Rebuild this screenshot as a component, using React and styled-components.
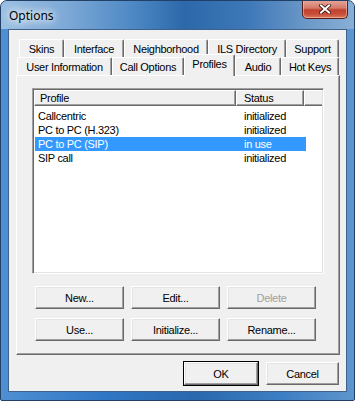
import styled, { createGlobalStyle } from "styled-components";

const GlobalStyle = createGlobalStyle`
  html, body {
    margin: 0;
    padding: 0;
    background: #fff;
  }
  body {
    font-family: "Liberation Sans", Arial, sans-serif;
    font-size: 11px;
    letter-spacing: -0.3px;
    color: #000;
  }
`;

const Window = styled.div`
  width: 355px;
  height: 401px;
  box-sizing: border-box;
  display: flex;
  flex-direction: column;
  border: 1px solid #223f66;
  border-radius: 7px 7px 2px 2px;
  overflow: hidden;
  background: linear-gradient(90deg, #4f8fd3 0%, #2f76c4 30%, #2a68ad 55%, #3d7fc4 80%, #5e95cd 100%);
`;

const TitleBar = styled.div`
  height: 28px;
  display: flex;
  align-items: flex-start;
  justify-content: space-between;
  background: linear-gradient(90deg, #9bbfe2 0%, #7eaad7 18%, #4c87c4 38%, #2c68aa 52%, #3e78b8 70%, #6f9bc9 88%, #8aafd6 100%);
`;

const Title = styled.span`
  font-family: "Noto Sans", "Open Sans", sans-serif;
  font-size: 12px;
  letter-spacing: 0;
  color: #000;
  padding: 6px 0 0 8px;
  text-shadow: 0 0 6px #fff, 0 0 10px #fff, 0 0 14px #eaf3fc;
`;

const CloseButton = styled.div`
  width: 46px;
  height: 19px;
  margin: -1px 6px 0 0;
  box-sizing: border-box;
  border: 1px solid #5a1e1a;
  border-top: none;
  border-radius: 0 0 5px 5px;
  box-shadow: inset 0 0 0 1px rgba(255, 200, 190, 0.55);
  background: linear-gradient(180deg, #e6a99c 0%, #d3796a 45%, #c0412d 55%, #c9503a 80%, #dd7d5c 100%);
  display: flex;
  align-items: center;
  justify-content: center;
`;

const ClientArea = styled.div`
  flex: 1;
  margin: 0 7px 8px 7px;
  border: 1px solid #3f628a;
  background: #f0f0f0;
  padding: 9px 6px 0 7px;
  display: flex;
  flex-direction: column;
`;

const TabRow = styled.div`
  display: flex;
  align-items: flex-end;
  height: 18px;
  margin-left: ${(p) => p.$indent}px;
`;

const Tab = styled.div`
  position: relative;
  box-sizing: border-box;
  width: ${(p) => p.$width}px;
  height: ${(p) => (p.$active ? 22 : 18)}px;
  margin-bottom: ${(p) => (p.$active ? -1 : 0)}px;
  z-index: ${(p) => (p.$active ? 2 : 1)};
  background: #f0f0f0;
  border-top: 1px solid #fff;
  border-left: 1px solid #fff;
  border-right: 1px solid #696969;
  border-radius: 2px 2px 0 0;
  box-shadow: inset -1px 0 0 #a0a0a0;
  display: flex;
  justify-content: center;
  padding-top: 3px;
  line-height: 13px;
  white-space: nowrap;
`;

const Panel = styled.div`
  position: relative;
  z-index: 1;
  box-sizing: border-box;
  height: 280px;
  background: #f0f0f0;
  border-top: 1px solid #fff;
  border-left: 1px solid #fff;
  border-right: 1px solid #696969;
  border-bottom: 1px solid #696969;
  box-shadow: inset -1px -1px 0 #a0a0a0;
  padding: 12px 0 0 15px;
`;

const ListView = styled.div`
  width: 292px;
  height: 186px;
  box-sizing: border-box;
  background: #fff;
  border-top: 1px solid #a0a0a0;
  border-left: 1px solid #a0a0a0;
  border-right: 1px solid #fff;
  border-bottom: 1px solid #fff;
  box-shadow: inset 1px 1px 0 #696969, inset -1px -1px 0 #e3e3e3;
  padding: 1px;
`;

const Header = styled.div`
  display: flex;
  height: 16px;
`;

const HeaderCell = styled.div`
  box-sizing: border-box;
  width: ${(p) => (p.$width ? `${p.$width}px` : "auto")};
  flex: ${(p) => (p.$width ? "none" : 1)};
  background: #f0f0f0;
  border-top: 1px solid #fff;
  border-left: 1px solid #fff;
  border-right: ${(p) => (p.$width ? "1px solid #696969" : "none")};
  border-bottom: 1px solid #696969;
  box-shadow: ${(p) => (p.$width ? "inset -1px -1px 0 #a0a0a0" : "inset 0 -1px 0 #a0a0a0")};
  padding-left: ${(p) => p.$pad || 0}px;
  line-height: 14px;
`;

const Rows = styled.div`
  padding: 3px 0 0 1px;
`;

const Row = styled.div`
  display: grid;
  grid-template-columns: 201px 70px;
  height: 14px;
  line-height: 14px;
  background: ${(p) => (p.$selected ? "#3399ff" : "transparent")};
  color: ${(p) => (p.$selected ? "#fff" : "#000")};
  width: 271px;
`;

const Cell = styled.div`
  padding-left: ${(p) => p.$pad}px;
  white-space: nowrap;
`;

const ButtonGrid = styled.div`
  display: grid;
  grid-template-columns: repeat(3, 89px);
  grid-auto-rows: 23px;
  column-gap: 7px;
  row-gap: 9px;
  margin: 12px 0 0 3px;
`;

const Button = styled.div`
  box-sizing: border-box;
  width: ${(p) => (p.$width ? `${p.$width}px` : "auto")};
  height: 23px;
  background: #f0f0f0;
  border-top: 1px solid #fff;
  border-left: 1px solid #fff;
  border-right: 1px solid #696969;
  border-bottom: 1px solid #696969;
  box-shadow: inset -1px -1px 0 #a0a0a0, inset 1px 1px 0 #e3e3e3;
  outline: ${(p) => (p.$default ? "1px solid #000" : "none")};
  color: ${(p) => (p.$disabled ? "#a0a0a0" : "#000")};
  display: flex;
  align-items: center;
  justify-content: center;
  padding-top: 1px;
`;

const Footer = styled.div`
  display: flex;
  justify-content: flex-end;
  gap: 8px;
  margin-top: 7px;
  padding-right: 1px;
`;

const rowOne = [
  ["Skins", 45],
  ["Interface", 60],
  ["Neighborhood", 84],
  ["ILS Directory", 78],
  ["Support", 53],
];

const rowTwo = [
  ["User Information", 95],
  ["Call Options", 72],
  ["Profiles", 51],
  ["Audio", 46],
  ["Hot Keys", 58],
];

const profiles = [
  { name: "Callcentric", status: "initialized" },
  { name: "PC to PC (H.323)", status: "initialized" },
  { name: "PC to PC (SIP)", status: "in use", selected: true },
  { name: "SIP call", status: "initialized" },
];

function CloseIcon() {
  return (
    <svg width="12" height="10" viewBox="0 0 12 10">
      <path d="M2 1.5 L10 8.5 M10 1.5 L2 8.5" stroke="#3a1210" strokeWidth="3.6" strokeLinecap="square" />
      <path d="M2 1.5 L10 8.5 M10 1.5 L2 8.5" stroke="#fff" strokeWidth="2" strokeLinecap="square" />
    </svg>
  );
}

export default function App() {
  return (
    <>
      <GlobalStyle />
      <Window>
        <TitleBar>
          <Title>Options</Title>
          <CloseButton>
            <CloseIcon />
          </CloseButton>
        </TitleBar>
        <ClientArea>
          <TabRow $indent={3}>
            {rowOne.map(([label, w]) => (
              <Tab key={label} $width={w}>{label}</Tab>
            ))}
          </TabRow>
          <TabRow $indent={1}>
            {rowTwo.map(([label, w]) => (
              <Tab key={label} $width={w} $active={label === "Profiles"}>{label}</Tab>
            ))}
          </TabRow>
          <Panel>
            <ListView>
              <Header>
                <HeaderCell $width={202} $pad={5}>Profile</HeaderCell>
                <HeaderCell $width={68} $pad={7}>Status</HeaderCell>
                <HeaderCell />
              </Header>
              <Rows>
                {profiles.map((p) => (
                  <Row key={p.name} $selected={p.selected}>
                    <Cell $pad={3}>{p.name}</Cell>
                    <Cell $pad={8}>{p.status}</Cell>
                  </Row>
                ))}
              </Rows>
            </ListView>
            <ButtonGrid>
              <Button>New...</Button>
              <Button>Edit...</Button>
              <Button $disabled>Delete</Button>
              <Button>Use...</Button>
              <Button>Initialize...</Button>
              <Button>Rename...</Button>
            </ButtonGrid>
          </Panel>
          <Footer>
            <Button $width={74} $default>OK</Button>
            <Button $width={73}>Cancel</Button>
          </Footer>
        </ClientArea>
      </Window>
    </>
  );
}
